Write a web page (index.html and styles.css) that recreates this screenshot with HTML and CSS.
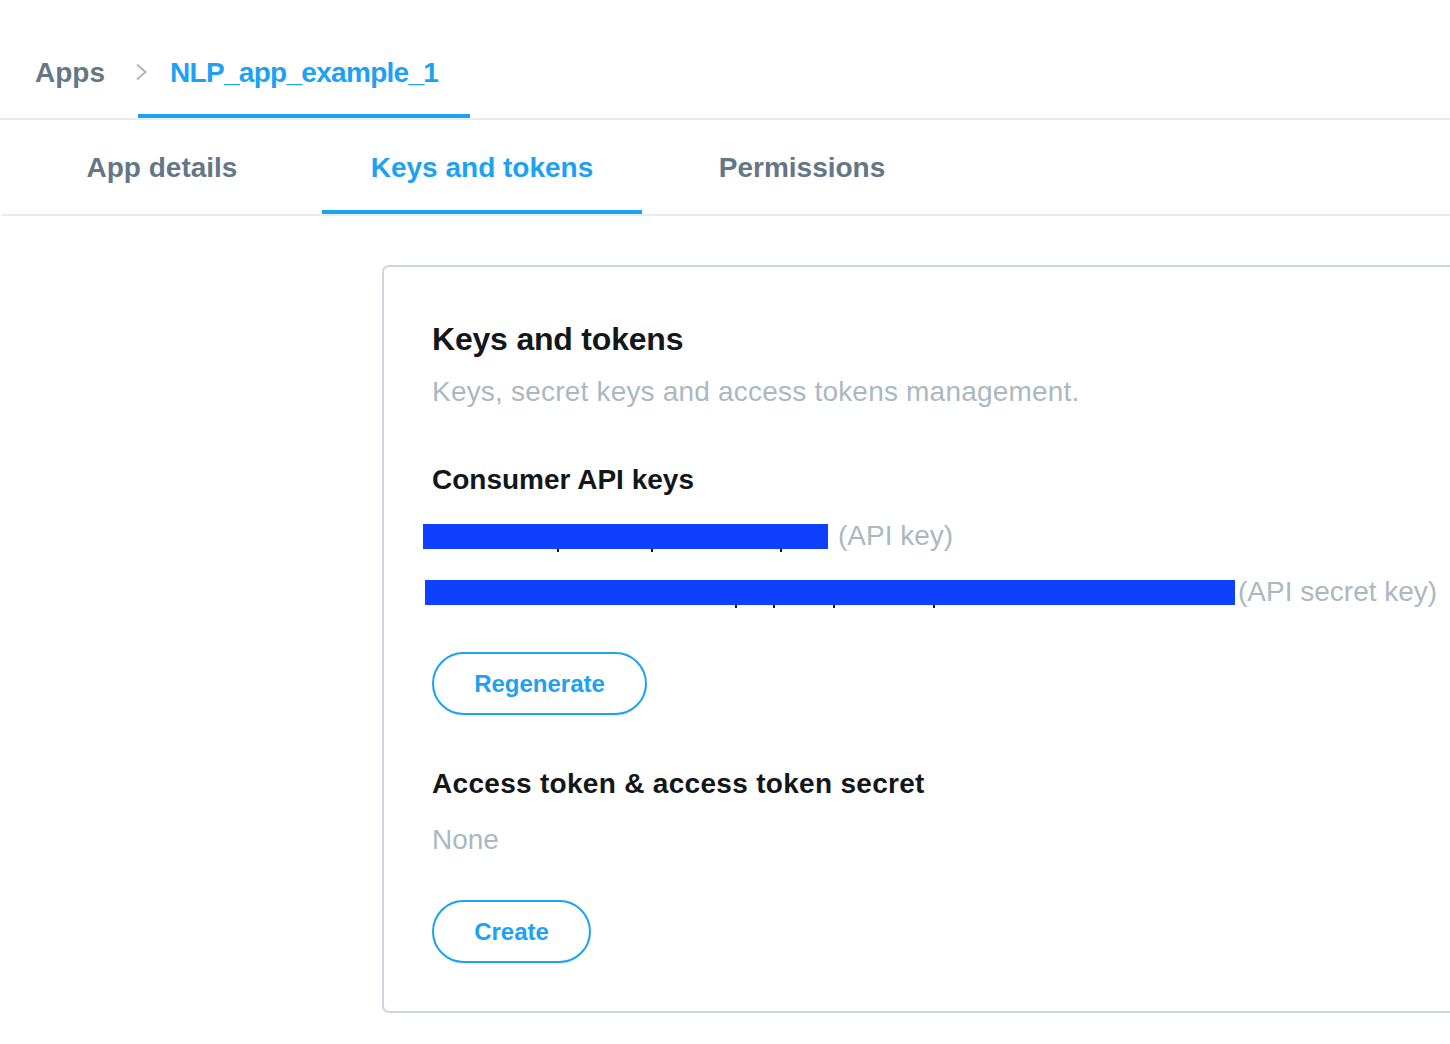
FILE: index.html
```html
<!DOCTYPE html>
<html lang="en">
<head>
<meta charset="utf-8">
<title>NLP_app_example_1 - Keys and tokens</title>
<link rel="stylesheet" href="styles.css">
</head>
<body>
  <nav class="crumbs">
    <a class="crumb crumb-root">Apps
      <svg class="chev" width="13" height="18" viewBox="0 0 13 18"><path d="M2 1.5 L10.5 9 L2 16.5" fill="none" stroke="#aab8c2" stroke-width="2"/></svg>
    </a>
    <a class="crumb crumb-active">NLP_app_example_1</a>
  </nav>
  <div class="tabs">
    <a class="tab">App details</a>
    <a class="tab tab-active">Keys and tokens</a>
    <a class="tab">Permissions</a>
  </div>
  <main class="main">
    <section class="card">
      <h1 class="card-title">Keys and tokens</h1>
      <p class="card-sub">Keys, secret keys and access tokens management.</p>

      <h2 class="sec-title sec-first">Consumer API keys</h2>
      <div class="key-row">
        <span class="redact redact-1"><i class="tick" style="left:134px"></i><i class="tick" style="left:228px"></i><i class="tick" style="left:357px"></i></span>
        <span class="key-label label-1">(API key)</span>
      </div>
      <div class="key-row">
        <span class="redact redact-2"><i class="tick" style="left:310px"></i><i class="tick" style="left:348px"></i><i class="tick" style="left:408px"></i><i class="tick" style="left:508px"></i></span>
        <span class="key-label label-2">(API secret key)</span>
      </div>
      <button class="btn btn-regen">Regenerate</button>

      <h2 class="sec-title sec-second">Access token &amp; access token secret</h2>
      <p class="none">None</p>
      <button class="btn btn-create">Create</button>
    </section>
  </main>
</body>
</html>
```

FILE: styles.css
```css
html, body {
  margin: 0;
  padding: 0;
  overflow: hidden;
  background: #ffffff;
}
body {
  font-family: "Liberation Sans", Arial, sans-serif;
  color: #14171a;
}
a { text-decoration: none; cursor: pointer; }

.crumbs {
  display: flex;
  border-bottom: 2px solid #e6ecf0;
  padding-left: 3px;
}
.crumb {
  position: relative;
  display: block;
  font-size: 28px;
  font-weight: 700;
  line-height: 32px;
  padding: 57px 32px 25px;
  border-bottom: 4px solid transparent;
  color: #657786;
}
.crumb-root { padding-left: 32px; padding-right: 33px; }
.crumb-active {
  color: #1da1f2;
  border-bottom-color: #1da1f2;
  letter-spacing: -0.7px;
}
.chev {
  position: absolute;
  right: -10px;
  top: 63px;
}

.tabs {
  display: flex;
  margin-left: 2px;
  border-bottom: 2px solid #e6ecf0;
}
.tab {
  display: block;
  width: 320px;
  text-align: center;
  font-size: 28px;
  font-weight: 700;
  line-height: 32px;
  padding: 32px 0 26px;
  border-bottom: 4px solid transparent;
  color: #657786;
}
.tab-active {
  color: #1da1f2;
  border-bottom-color: #1da1f2;
}

.main {
  padding: 49px 0 0 382px;
}
.card {
  width: 1200px;
  border: 2px solid #ccd6dd;
  border-radius: 7px;
  padding: 52px 48px 48px;
  box-sizing: border-box;
}
.card-title {
  margin: 0;
  font-size: 32px;
  line-height: 40px;
  font-weight: 700;
  color: #14171a;
  letter-spacing: -0.2px;
}
.card-sub {
  margin: 15px 0 0;
  font-size: 28px;
  line-height: 36px;
  color: #aab8c2;
  letter-spacing: 0.2px;
}
.sec-title {
  margin: 0;
  font-size: 28px;
  line-height: 36px;
  font-weight: 700;
  color: #14171a;
}
.sec-first { margin-top: 52px; }
.sec-second { margin-top: 51px; letter-spacing: 0.3px; }

.key-row {
  display: flex;
  align-items: center;
  height: 36px;
  margin-top: 20px;
  white-space: nowrap;
}
.redact {
  position: relative;
  display: block;
  height: 25px;
  background: #0f3fff;
}
.redact-1 { width: 405px; margin-left: -9px; }
.redact-2 { width: 810px; margin-left: -7px; }
.tick {
  position: absolute;
  top: 25px;
  width: 2px;
  height: 3px;
  background: #14171a;
}
.key-label {
  font-size: 28px;
  line-height: 36px;
  color: #aab8c2;
}
.label-1 { margin-left: 10px; }
.label-2 { margin-left: 3px; }

.btn {
  display: block;
  height: 63px;
  border: 2px solid #1da1f2;
  border-radius: 32px;
  background: #ffffff;
  color: #1da1f2;
  font-family: "Liberation Sans", Arial, sans-serif;
  font-size: 24px;
  font-weight: 700;
  line-height: 59px;
  padding: 0;
  cursor: pointer;
}
.btn-regen { margin-top: 42px; width: 215px; }
.btn-create { margin-top: 42px; width: 159px; }

.none {
  margin: 20px 0 0;
  font-size: 28px;
  line-height: 36px;
  color: #aab8c2;
}
```
